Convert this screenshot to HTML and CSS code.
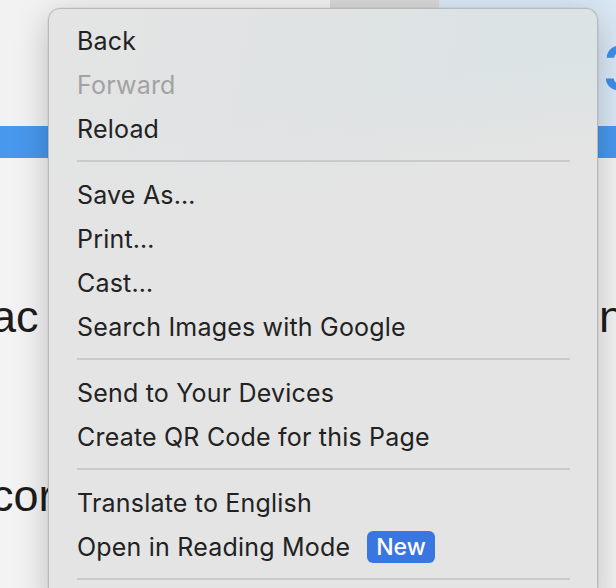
FILE: index.html
```html
<!DOCTYPE html>
<html lang="en">
<head>
<meta charset="utf-8">
<title>Context menu</title>
<link rel="stylesheet" href="styles.css">
</head>
<body>
<div class="page">
  <header class="toolbar">
    <div class="tb-left"></div>
    <div class="tb-tab"></div>
    <div class="tb-right"><span class="tb-num">3</span></div>
  </header>
  <div class="bluebar"></div>
  <main class="content">
    <p class="line line-one"><span>ac</span><span>n</span></p>
    <p class="line line-two"><span>cor</span></p>
  </main>
</div>

<div class="menu" role="menu">
  <div class="item">Back</div>
  <div class="item disabled">Forward</div>
  <div class="item">Reload</div>
  <div class="sep"></div>
  <div class="item">Save As…</div>
  <div class="item">Print…</div>
  <div class="item">Cast…</div>
  <div class="item">Search Images with Google</div>
  <div class="sep"></div>
  <div class="item">Send to Your Devices</div>
  <div class="item">Create QR Code for this Page</div>
  <div class="sep"></div>
  <div class="item">Translate to English</div>
  <div class="item">Open in Reading Mode <span class="badge">New</span></div>
  <div class="sep"></div>
</div>
</body>
</html>
```

FILE: styles.css
```css
html, body {
  margin: 0;
  padding: 0;
}
body {
  width: 616px;
  height: 588px;
  overflow: hidden;
  position: relative;
  background: #f4f4f4;
  font-family: "Liberation Sans", Arial, sans-serif;
}
.page {
  display: flex;
  flex-direction: column;
  height: 588px;
}
.toolbar {
  display: flex;
  height: 126px;
}
.tb-left {
  width: 330px;
  background: #f2f2f2;
}
.tb-tab {
  width: 109px;
  background: #d9d9d9;
}
.tb-right {
  flex: 1;
  background: #dae8f6;
  display: flex;
  justify-content: flex-end;
  overflow: hidden;
}
.tb-num {
  font-family: "Inter", sans-serif;
  font-size: 60px;
  font-weight: 600;
  color: #3f8fe9;
  line-height: 1;
  margin-top: 38px;
  margin-right: -25px;
}
.bluebar {
  height: 32px;
  background: #4898ee;
}
.content {
  flex: 1;
  background: #f3f3f3;
  overflow: hidden;
}
.line {
  margin: 0;
  display: flex;
  justify-content: space-between;
  font-size: 45px;
  line-height: 1;
  color: #1c1c1c;
}
.line-one {
  margin-top: 136px;
  margin-left: -9px;
  margin-right: -8px;
}
.line-two {
  margin-top: 134px;
  margin-left: -9px;
}

.menu {
  position: absolute;
  left: 48px;
  top: 8px;
  width: 550px;
  height: 600px;
  box-sizing: border-box;
  border: 1px solid #b9b9b9;
  border-bottom: 0;
  border-radius: 12px 12px 0 0;
  padding-top: 10px;
  background:
    linear-gradient(170deg, rgba(228,228,228,0) 0%, rgba(228,228,228,0) 20%, #e4e4e4 34%),
    linear-gradient(100deg, #e4e4e4 0%, #dfe3e4 45%, #d9e3e4 100%);
  box-shadow: 0 8px 34px rgba(0,0,0,0.22), 0 0 0 0.5px rgba(0,0,0,0.08);
  font-family: "Inter", "Noto Sans", sans-serif;
  font-size: 25px;
  letter-spacing: 0.2px;
  color: #222222;
}
.item {
  height: 44px;
  display: flex;
  align-items: center;
  padding-left: 28px;
  white-space: nowrap;
}
.item.disabled {
  color: #a2a2a2;
}
.sep {
  height: 2px;
  margin: 9px 27px 11px 28px;
  background: #cacaca;
}
.badge {
  margin-left: 17px;
  height: 32px;
  padding: 0 9px;
  box-sizing: border-box;
  display: inline-flex;
  align-items: center;
  border-radius: 6px;
  background: #3a76e2;
  color: #ffffff;
  font-weight: 500;
  font-size: 23px;
  letter-spacing: 0;
}
```
